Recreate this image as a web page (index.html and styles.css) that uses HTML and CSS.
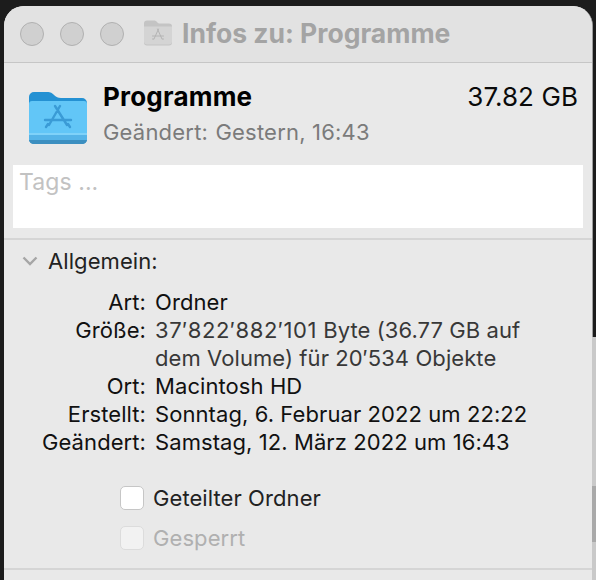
FILE: index.html
```html
<!DOCTYPE html>
<html lang="de">
<head>
    <meta charset="UTF-8">
    <title>Infos zu: Programme</title>
    <link rel="stylesheet" href="styles.css">
</head>
<body>

<div class="backdrop">
    <div class="backdrop-light"></div>
    <div class="backdrop-dark"></div>
    <div class="backdrop-light backdrop-rest"></div>
</div>

<div class="window">
    <!-- Title bar -->
    <div class="titlebar">
        <div class="traffic">
            <span class="light"></span>
            <span class="light"></span>
            <span class="light"></span>
        </div>
        <svg class="title-icon" viewBox="0 0 60 52">
            <path d="M2 8a6 6 0 0 1 6-6h14c3 0 4 1 6 3s3 3 6 3h18a6 6 0 0 1 6 6v32a6 6 0 0 1-6 6H8a6 6 0 0 1-6-6z" fill="#c4c4c4"/>
            <path d="M2 14h56v30a6 6 0 0 1-6 6H8a6 6 0 0 1-6-6z" fill="#d4d4d4"/>
            <path d="M31 19l-9 20M29 19l9 20M19 33h22M21 39h-2M41 39h-2" stroke="#b4b4b4" stroke-width="2" fill="none" stroke-linecap="round"/>
        </svg>
        <span class="title-text">Infos zu: Programme</span>
    </div>

    <!-- Header -->
    <div class="summary">
        <svg class="folder" viewBox="0 0 60 54">
            <path d="M1 6a5 5 0 0 1 5-5h13c4 0 5 1 7 3s4 3 7 3h21a5 5 0 0 1 5 5v36a5 5 0 0 1-5 5H6a5 5 0 0 1-5-5z" fill="#2491d3"/>
            <path d="M1 13a3 3 0 0 1 3-3h52a3 3 0 0 1 3 3v34a5 5 0 0 1-5 5H6a5 5 0 0 1-5-5z" fill="#62c6f7"/>
            <path d="M1 42h58v2H1z" fill="#7fd2f9"/>
            <path d="M1 44h58v3a5 5 0 0 1-5 5H6a5 5 0 0 1-5-5z" fill="#55b4e8"/>
            <path d="M1 49h58a5 5 0 0 1-5 4H6a5 5 0 0 1-5-4z" fill="#3c8fc0"/>
            <path d="M32 15l-11 19M27 15l12 19M17 29h26M20 33l-2 3M40 33l2 3" stroke="#3a9bd6" stroke-width="2.4" fill="none" stroke-linecap="round"/>
        </svg>
        <div class="summary-text">
            <div class="summary-top">
                <span class="name">Programme</span>
                <span class="size">37.82 GB</span>
            </div>
            <div class="modified"><span class="modified-label">Geändert:</span> Gestern, 16:43</div>
        </div>
    </div>

    <!-- Tags -->
    <div class="tags">Tags ...</div>

    <!-- Allgemein -->
    <div class="section">
        <div class="section-head">
            <svg class="chevron" viewBox="0 0 16 10">
                <path d="M1.5 1.5L8 8l6.5-6.5" stroke="#a6a6a6" stroke-width="2.4" fill="none"/>
            </svg>
            <span>Allgemein:</span>
        </div>

        <div class="info-grid">
            <div class="info-label">Art:</div>
            <div>Ordner</div>
            <div class="info-label">Größe:</div>
            <div class="info-long"><span class="bytes">37′822′882′101</span> Byte (36.77 GB auf<br>dem Volume) für 20′534 Objekte</div>
            <div class="info-label">Ort:</div>
            <div>Macintosh HD</div>
            <div class="info-label">Erstellt:</div>
            <div>Sonntag, 6. Februar 2022 um 22:22</div>
            <div class="info-label">Geändert:</div>
            <div>Samstag, 12. März 2022 um 16:43</div>
        </div>

        <div class="checks">
            <div class="check-row">
                <span class="box"></span>
                <span>Geteilter Ordner</span>
            </div>
            <div class="check-row disabled">
                <span class="box"></span>
                <span>Gesperrt</span>
            </div>
        </div>
    </div>
</div>

</body>
</html>
```

FILE: styles.css
```css
/* Basic styling */
html, body { height: 100%; }
body {
    margin: 0;
    height: 580px;
    overflow: hidden;
    background-color: #1c1c1c;
    font-family: Inter, "Liberation Sans", sans-serif;
    font-size: 22px;
    letter-spacing: 0.08px;
    color: #111;
    position: relative;
}

/* Desktop showing behind the right edge */
.backdrop {
    position: absolute;
    top: 337px;
    right: 0;
    bottom: 0;
    width: 4px;
    display: flex;
    flex-direction: column;
}
.backdrop-light { height: 149px; background-color: #c9c9c9; }
.backdrop-dark { height: 56px; background-color: #a9a9a9; }
.backdrop-rest { flex: 1; }

/* Window */
.window {
    width: 589px;
    height: 574px;
    margin: 6px 0 0 4px;
    background-color: #e9e9e9;
    border-radius: 20px 20px 0 0;
    border-right: 1px solid #9c9c9c;
    box-sizing: border-box;
    overflow: hidden;
}

/* Title bar */
.titlebar {
    height: 57px;
    box-sizing: border-box;
    background-color: #e2e2e2;
    border-bottom: 1px solid #c6c6c6;
    display: flex;
    align-items: center;
    padding-left: 16px;
}
.traffic { display: flex; gap: 16px; margin-right: 19px; }
.light {
    width: 24px;
    height: 24px;
    box-sizing: border-box;
    border-radius: 50%;
    background-color: #d0d0d0;
    border: 1px solid #b0b0b0;
}
.title-icon { width: 30px; height: 27px; margin-right: 9px; margin-top: -3px; }
.title-text { font-size: 26.5px; font-weight: 700; letter-spacing: 0; color: #a4a4a4; margin-top: -3px; }

/* Summary */
.summary { display: flex; padding: 18px 14px 0 24px; }
.folder { width: 60px; height: 54px; margin-top: 10px; margin-right: 15px; flex-shrink: 0; }
.summary-text { flex: 1; }
.summary-top { display: flex; justify-content: space-between; align-items: baseline; }
.name { font-size: 26px; font-weight: 700; color: #000; letter-spacing: 0.2px; }
.size { font-size: 26px; color: #0a0a0a; }
.modified { font-size: 22px; letter-spacing: 0.2px; color: #7b7b7b; margin-top: 7px; }
.modified-label { margin-right: 1px; }

/* Tags */
.tags {
    height: 63px;
    margin: 20px 9px 0 9px;
    padding: 3px 6px;
    box-sizing: border-box;
    background-color: #fff;
    font-size: 23px;
    color: #c2c2c2;
}

/* General section */
.section { margin-top: 10px; border-top: 2px solid #d5d5d5; height: 332px; border-bottom: 2px solid #d5d5d5; box-sizing: border-box; }
.section-head { display: flex; align-items: center; padding: 8px 0 0 18px; color: #222; }
.chevron { width: 16px; height: 10px; margin-right: 10px; }
.info-grid {
    display: grid;
    grid-template-columns: 142px 1fr;
    column-gap: 9px;
    margin-top: 14px;
    line-height: 28px;
}
.info-label { text-align: right; }
.info-long { color: #383838; }
.bytes { letter-spacing: 0.6px; }

/* Checkboxes */
.checks { margin: 30px 0 0 116px; display: flex; flex-direction: column; gap: 16px; }
.check-row { display: flex; align-items: center; gap: 9px; height: 24px; color: #222; }
.box {
    width: 24px;
    height: 24px;
    box-sizing: border-box;
    background-color: #fff;
    border: 1px solid #c6c6c6;
    border-radius: 5px;
}
.check-row.disabled { color: #b0b0b0; }
.disabled .box { background-color: #f2f2f2; border-color: #dcdcdc; }
```
